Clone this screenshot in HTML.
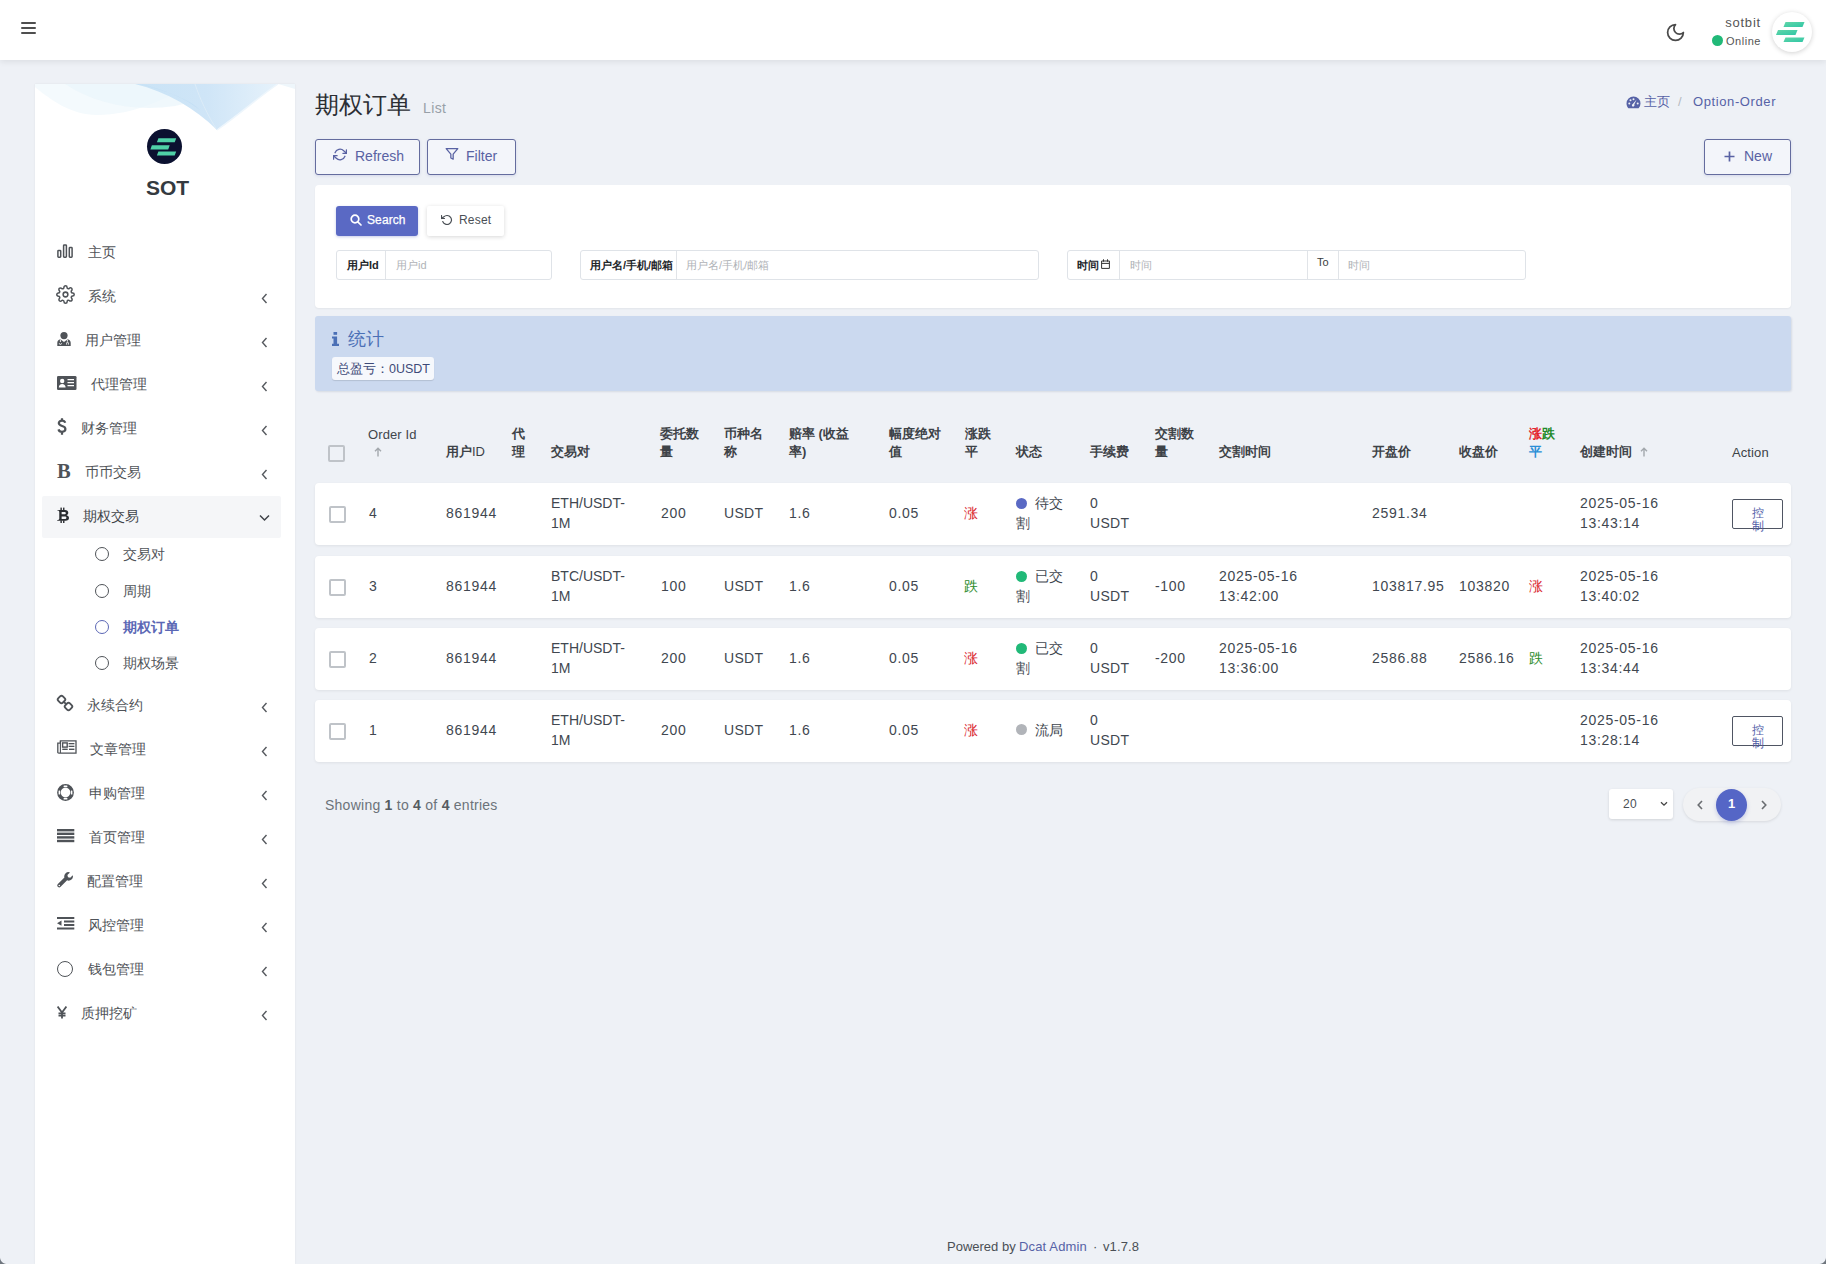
<!DOCTYPE html>
<html><head><meta charset="utf-8">
<style>
*{box-sizing:border-box;margin:0;padding:0}
html,body{width:1826px;height:1264px;overflow:hidden}
body{background:#eef1f6;font-family:"Liberation Sans",sans-serif;font-size:14px;color:#414750;position:relative}
.abs{position:absolute;white-space:nowrap}
#header{position:absolute;left:0;top:0;width:1826px;height:60px;background:#fff;box-shadow:0 2px 6px rgba(0,0,0,.08)}
#sidebar{position:absolute;left:35px;top:84px;width:260px;height:1180px;background:#fff;overflow:hidden;box-shadow:0 0 2px rgba(0,0,0,.07)}
.mi{position:absolute;left:0;width:260px;height:20px;color:#4e5257;font-size:14px}
.mi .t{position:absolute;top:0;line-height:20px}
.mi .ic{position:absolute;left:22px}
.mi .chev{position:absolute;left:224px;top:5px}
.btn-o{position:absolute;border:1px solid #5a69c4;border-radius:3px;color:#5a69c4;font-size:14px;background:transparent}
.card{position:absolute;background:#fff;border-radius:4px}
.ig{position:absolute;height:30px;border:1px solid #dfe3e8;border-radius:3px;background:#fff}
.ig .lab{position:absolute;top:0;height:28px;line-height:28px;font-size:11px;font-weight:bold;color:#222;text-align:center}
.ig .sep{position:absolute;top:0;width:1px;height:28px;background:#dfe3e8}
.ig .ph{position:absolute;top:0;line-height:28px;font-size:11px;color:#a6a9ad}
.th{position:absolute;font-size:13px;font-weight:bold;color:#3d4247;line-height:18px;white-space:nowrap}
.row{position:absolute;left:315px;width:1476px;height:62px;background:#fff;border-radius:4px;box-shadow:0 1px 3px rgba(0,0,0,.07)}
.td{position:absolute;font-size:14px;color:#414750;line-height:20px;white-space:nowrap}
.cb{position:absolute;width:17px;height:17px;border:2px solid #b9bdc2;border-radius:2px;background:#fff}
</style></head>
<body>
<div id="header">
<div class="abs" style="left:21px;top:22px;width:15px;height:2px;background:#4f4f4f;border-radius:1px"></div>
<div class="abs" style="left:21px;top:27px;width:15px;height:2px;background:#4f4f4f;border-radius:1px"></div>
<div class="abs" style="left:21px;top:32px;width:15px;height:2px;background:#4f4f4f;border-radius:1px"></div>
<svg class="abs" style="left:1665px;top:22px" width="21" height="21" viewBox="0 0 24 24"><path d="M12 3a6 6 0 0 0 9 9 9 9 0 1 1-9-9Z" fill="none" stroke="#4a4a4a" stroke-width="2" stroke-linejoin="round"/></svg>
<div class="abs" id="uname" style="right:65px;top:15px;font-size:13px;color:#555;line-height:16px;letter-spacing:.8px">sotbit</div>
<div class="abs" style="left:1712px;top:35px;width:11px;height:11px;border-radius:50%;background:#21b978"></div>
<div class="abs" id="online" style="right:65px;top:35px;font-size:11px;color:#555;line-height:13px;letter-spacing:.55px">Online</div>
<div class="abs" style="left:1772px;top:12px;width:40px;height:40px;border-radius:50%;background:#fff;box-shadow:0 1px 5px rgba(0,0,0,.18)">
<svg width="40" height="40" viewBox="0 0 40 40" style="position:absolute;left:0;top:0"><defs><linearGradient id="gg" x1="0" y1="0" x2="1" y2="1"><stop offset="0" stop-color="#62d6a8"/><stop offset="1" stop-color="#2fc6a6"/></linearGradient></defs>
<path d="M13.5 10h19l-2 5h-19z" fill="url(#gg)"/><path d="M6 18h19.5l-2 5H4z" fill="url(#gg)"/><path d="M13.5 25.5h19l-2 4.5h-19z" fill="url(#gg)"/></svg></div>
</div>
<div id="sidebar">
<svg style="position:absolute;left:0;top:0" width="260" height="60" viewBox="0 0 260 60">
<defs><linearGradient id="wv" x1="0" y1="0" x2="1" y2="0"><stop offset="0" stop-color="#c9e3f6"/><stop offset=".5" stop-color="#cfe5f7"/><stop offset="1" stop-color="#e6f2fb"/></linearGradient></defs>
<path d="M0 0H160C130 14 100 31 62 31 36 31 16 16 0 3Z" fill="#f4fafd"/>
<path d="M30 0C60 20 100 28 140 22 160 18 175 10 190 0Z" fill="#eaf5fb" opacity=".7"/>
<path d="M100 0C132 8 160 24 182 46 200 33 222 15 243 0Z" fill="url(#wv)"/>
<path d="M105 0C135 8 155 16 165 26 150 14 128 5 105 0Z" fill="#b9daf3" opacity=".6"/>
<path d="M160 0C165 15 172 30 182 46" stroke="#dcecf8" stroke-width="1" fill="none"/>
<path d="M182 46C205 30 225 12 243 0" stroke="#eef6fc" stroke-width="1.5" fill="none"/>
<path d="M243 0H260V5C253 3 248 1 243 0Z" fill="#eef6fb"/>
</svg>
<div style="position:absolute;left:112px;top:45px;width:35px;height:35px;border-radius:50%;background:#0b1130">
<svg width="35" height="35" viewBox="0 0 35 35" style="position:absolute;left:0;top:0"><g fill="#4fd1a7"><path d="M11.4 9.2h17.8l-1.5 4.1H9.9z"/><path d="M4.9 16.2h17.8l-1.5 4.2H3.4z"/><path d="M11.4 22.5h17.8l-1.5 4.1H9.9z"/></g></svg></div>
<div style="position:absolute;left:0;width:265px;top:92px;text-align:center;font-size:21px;font-weight:bold;color:#343a40;line-height:24px">SOT</div>
</div>
<div class="abs" style="left:42px;top:496px;width:239px;height:42px;background:#f5f6f8;border-radius:2px"></div>
<svg class="abs" style="left:57px;top:244px" width="16" height="14" viewBox="0 0 16 14"><g fill="none" stroke="#4f5358" stroke-width="1.5"><rect x=".9" y="6.4" width="2.8" height="6.8" rx=".7"/><rect x="6.6" y=".9" width="2.8" height="12.3" rx=".7"/><rect x="12.3" y="3.6" width="2.8" height="9.6" rx=".7"/></g></svg>
<div class="abs" style="left:88px;top:242px;line-height:20px;font-size:14px;color:#4f5358;">主页</div>
<svg class="abs" style="left:56px;top:285px" width="19" height="19" viewBox="0 0 24 24"><g fill="none" stroke="#4f5358" stroke-width="1.9" stroke-linejoin="round"><circle cx="12" cy="12" r="3"/><path d="M19.4 15a1.65 1.65 0 0 0 .33 1.82l.06.06a2 2 0 0 1 0 2.83 2 2 0 0 1-2.83 0l-.06-.06a1.65 1.65 0 0 0-1.82-.33 1.65 1.65 0 0 0-1 1.51V21a2 2 0 0 1-2 2 2 2 0 0 1-2-2v-.09A1.65 1.65 0 0 0 9 19.4a1.650 1.65 0 0 0-1.82.33l-.06.06a2 2 0 0 1-2.83 0 2 2 0 0 1 0-2.830l.06-.06a1.65 1.65 0 0 0 .33-1.82 1.65 1.65 0 0 0-1.51-1H3a2 2 0 0 1-2-2 2 2 0 0 1 2-2h.09A1.65 1.65 0 0 0 4.6 9a1.65 1.65 0 0 0-.33-1.82l-.06-.06a2 2 0 0 1 0-2.83 2 2 0 0 1 2.83 0l.06.06a1.65 1.65 0 0 0 1.82.33H9a1.65 1.65 0 0 0 1-1.51V3a2 2 0 0 1 2-2 2 2 0 0 1 2 2v.09a1.65 1.65 0 0 0 1 1.51 1.65 1.65 0 0 0 1.82-.33l.06-.06a2 2 0 0 1 2.83 0 2 2 0 0 1 0 2.83l-.06.06a1.65 1.65 0 0 0-.33 1.82V9a1.65 1.65 0 0 0 1.51 1H21a2 2 0 0 1 2 2 2 2 0 0 1-2 2h-.09a1.65 1.65 0 0 0-1.51 1z"/></g></svg>
<div class="abs" style="left:88px;top:286px;line-height:20px;font-size:14px;color:#4f5358;">系统</div>
<svg class="abs" style="left:261px;top:293px" width="7" height="11" viewBox="0 0 7 11"><path d="M5.5 1 1.5 5.5 5.5 10" fill="none" stroke="#55595e" stroke-width="1.4"/></svg>
<svg class="abs" style="left:57px;top:332px" width="14" height="14" viewBox="0 0 14 14"><circle cx="7" cy="3.6" r="3.6" fill="#4f5358"/><path d="M.3 14v-3.2c0-2 1.2-3.2 3-3.6L7 10l3.7-2.8c1.8.4 3 1.6 3 3.6V14z" fill="#4f5358"/><path d="M3.4 7.6v2.4M2.3 11.3a1.1 1.1 0 0 0 2.2 0M10.4 7.8v1.8M9.6 12.6v-1.4a.9.9 0 0 1 1.8 0v1.4" stroke="#fff" stroke-width=".9" fill="none"/></svg>
<div class="abs" style="left:85px;top:330px;line-height:20px;font-size:14px;color:#4f5358;">用户管理</div>
<svg class="abs" style="left:261px;top:337px" width="7" height="11" viewBox="0 0 7 11"><path d="M5.5 1 1.5 5.5 5.5 10" fill="none" stroke="#55595e" stroke-width="1.4"/></svg>
<svg class="abs" style="left:57px;top:376px" width="20" height="14" viewBox="0 0 20 14"><rect x="0" y="0" width="19.5" height="14" rx="1.3" fill="#4f5358"/><circle cx="5.2" cy="5" r="2.2" fill="#fff"/><path d="M1.8 11.6c0-2.3 1.4-3.6 3.4-3.6s3.4 1.3 3.4 3.6z" fill="#fff"/><path d="M10.5 3.6h6.5M10.5 6.6h6.5M10.5 9.6h6.5" stroke="#fff" stroke-width="1.3"/></svg>
<div class="abs" style="left:91px;top:374px;line-height:20px;font-size:14px;color:#4f5358;">代理管理</div>
<svg class="abs" style="left:261px;top:381px" width="7" height="11" viewBox="0 0 7 11"><path d="M5.5 1 1.5 5.5 5.5 10" fill="none" stroke="#55595e" stroke-width="1.4"/></svg>
<svg class="abs" style="left:57px;top:418px" width="10" height="17" viewBox="0 0 10 17"><path d="M8.2 4.8C7.8 3.4 6.6 2.6 5 2.6 3.1 2.6 1.8 3.6 1.8 5.1c0 1.6 1.3 2.3 3.3 2.9 2.1.6 3.3 1.4 3.3 3.1 0 1.6-1.4 2.7-3.4 2.7-1.8 0-3.1-.9-3.5-2.4M5 .3v2.5M5 14v2.7" fill="none" stroke="#4f5358" stroke-width="2.2"/></svg>
<div class="abs" style="left:81px;top:418px;line-height:20px;font-size:14px;color:#4f5358;">财务管理</div>
<svg class="abs" style="left:261px;top:425px" width="7" height="11" viewBox="0 0 7 11"><path d="M5.5 1 1.5 5.5 5.5 10" fill="none" stroke="#55595e" stroke-width="1.4"/></svg>
<div class="abs" style="left:57px;top:461px;font-family:'Liberation Serif',serif;font-size:20.5px;line-height:20px;font-weight:bold;color:#4f5358">B</div>
<div class="abs" style="left:85px;top:462px;line-height:20px;font-size:14px;color:#4f5358;">币币交易</div>
<svg class="abs" style="left:261px;top:469px" width="7" height="11" viewBox="0 0 7 11"><path d="M5.5 1 1.5 5.5 5.5 10" fill="none" stroke="#55595e" stroke-width="1.4"/></svg>
<svg class="abs" style="left:57px;top:507px" width="13" height="16" viewBox="0 0 13 16"><path fill-rule="evenodd" fill="#2a2d31" d="M0.1 3H8C10.2 3 11.3 4.1 11.3 5.8 11.3 7 10.6 7.8 9.6 8.2 11.1 8.6 12 9.6 12 11 12 12.7 10.7 13.65 8.4 13.65H0.1V13.3C1.4 13.1 2.26 12.6 2.26 11.8V4.9C2.26 4 1.4 3.5 0.1 3.3ZM4.63 5.1H7.4C8.3 5.1 8.8 5.6 8.8 6.2 8.8 6.8 8.3 7.24 7.4 7.24H4.63ZM4.63 9.38H7.7C8.8 9.38 9.4 9.9 9.4 10.7 9.4 11.5 8.8 12 7.7 12H4.63Z"/><g fill="#2a2d31"><rect x="3.44" y=".6" width="1.4" height="2.6"/><rect x="6.05" y=".6" width="1.4" height="2.6"/><rect x="3.44" y="13.4" width="1.4" height="2.6"/><rect x="6.05" y="13.4" width="1.4" height="2.6"/></g></svg>
<div class="abs" style="left:83px;top:506px;line-height:20px;font-size:14px;color:#4f5358;color:#3f4348">期权交易</div>
<svg class="abs" style="left:259px;top:514px" width="11" height="8" viewBox="0 0 11 8"><path d="M1 1.5 5.5 6 10 1.5" fill="none" stroke="#3f4348" stroke-width="1.5"/></svg>
<div class="abs" style="left:95px;top:547px;width:14px;height:14px;border:1.6px solid #4f5358;border-radius:50%"></div>
<div class="abs" style="left:123px;top:544px;line-height:20px;font-size:14px;color:#4f5358;">交易对</div>
<div class="abs" style="left:95px;top:584px;width:14px;height:14px;border:1.6px solid #4f5358;border-radius:50%"></div>
<div class="abs" style="left:123px;top:581px;line-height:20px;font-size:14px;color:#4f5358;">周期</div>
<div class="abs" style="left:95px;top:620px;width:14px;height:14px;border:1.6px solid #5b67b5;border-radius:50%"></div>
<div class="abs" style="left:123px;top:617px;line-height:20px;font-size:14px;color:#4f5358;font-weight:bold;color:#5b67b5">期权订单</div>
<div class="abs" style="left:95px;top:656px;width:14px;height:14px;border:1.6px solid #4f5358;border-radius:50%"></div>
<div class="abs" style="left:123px;top:653px;line-height:20px;font-size:14px;color:#4f5358;">期权场景</div>
<svg class="abs" style="left:56px;top:694px" width="18" height="18" viewBox="0 0 18 18"><g fill="none" stroke="#4f5358" stroke-width="1.9"><rect x="2.3" y="2.3" width="6.4" height="6.4" rx="2" transform="rotate(45 5.5 5.5)"/><rect x="9.3" y="9.3" width="6.4" height="6.4" rx="2" transform="rotate(45 12.5 12.5)"/><path d="M7.2 7.2 10.8 10.8"/></g></svg>
<div class="abs" style="left:87px;top:695px;line-height:20px;font-size:14px;color:#4f5358;">永续合约</div>
<svg class="abs" style="left:261px;top:702px" width="7" height="11" viewBox="0 0 7 11"><path d="M5.5 1 1.5 5.5 5.5 10" fill="none" stroke="#55595e" stroke-width="1.4"/></svg>
<svg class="abs" style="left:57px;top:740px" width="20" height="14" viewBox="0 0 20 14"><g fill="none" stroke="#4f5358"><path d="M3.4 .8h15.6v12.4H1.8A1 1 0 0 1 .8 12.2V3.2h2.6z" stroke-width="1.3"/><path d="M3.4 1v12" stroke-width="1.1"/><rect x="5.6" y="2.9" width="4.6" height="4.2" stroke-width="1.4"/></g><g fill="#4f5358"><rect x="11.6" y="3" width="5.8" height="1.3"/><rect x="11.6" y="5.7" width="5.8" height="1.3"/><rect x="5.3" y="8.6" width="5.4" height="1.4"/><rect x="12" y="8.6" width="5.4" height="1.4"/></g></svg>
<div class="abs" style="left:90px;top:739px;line-height:20px;font-size:14px;color:#4f5358;">文章管理</div>
<svg class="abs" style="left:261px;top:746px" width="7" height="11" viewBox="0 0 7 11"><path d="M5.5 1 1.5 5.5 5.5 10" fill="none" stroke="#55595e" stroke-width="1.4"/></svg>
<svg class="abs" style="left:57px;top:784px" width="17" height="17" viewBox="0 0 17 17"><circle cx="8.5" cy="8.5" r="6.6" fill="none" stroke="#4f5358" stroke-width="3.6"/><g fill="#fff"><rect x="6.6" y="1.6" width="3.8" height="1.6" rx=".5"/><rect x="6.6" y="13.8" width="3.8" height="1.6" rx=".5"/><rect x="1.6" y="6.6" width="1.6" height="3.8" rx=".5"/><rect x="13.8" y="6.6" width="1.6" height="3.8" rx=".5"/></g></svg>
<div class="abs" style="left:89px;top:783px;line-height:20px;font-size:14px;color:#4f5358;">申购管理</div>
<svg class="abs" style="left:261px;top:790px" width="7" height="11" viewBox="0 0 7 11"><path d="M5.5 1 1.5 5.5 5.5 10" fill="none" stroke="#55595e" stroke-width="1.4"/></svg>
<svg class="abs" style="left:57px;top:829px" width="18" height="14" viewBox="0 0 18 14"><g fill="#4f5358"><rect x="0" y="0" width="17.3" height="2.4"/><rect x="0" y="3.6" width="17.3" height="2.4"/><rect x="0" y="7.2" width="17.3" height="2.4"/><rect x="0" y="10.8" width="17.3" height="2.4"/></g></svg>
<div class="abs" style="left:89px;top:827px;line-height:20px;font-size:14px;color:#4f5358;">首页管理</div>
<svg class="abs" style="left:261px;top:834px" width="7" height="11" viewBox="0 0 7 11"><path d="M5.5 1 1.5 5.5 5.5 10" fill="none" stroke="#55595e" stroke-width="1.4"/></svg>
<svg class="abs" style="left:57px;top:872px" width="17" height="16" viewBox="0 0 17 16"><path d="M15.8 3.2 13.2 5.8 11 5.2 10.4 3 13 .4A4.3 4.3 0 0 0 7.4 5.6L.9 12.1a1.9 1.9 0 0 0 2.7 2.7l6.5-6.5a4.3 4.3 0 0 0 5.7-5.1z" fill="#4f5358"/><circle cx="2.3" cy="13.5" r=".8" fill="#fff"/></svg>
<div class="abs" style="left:87px;top:871px;line-height:20px;font-size:14px;color:#4f5358;">配置管理</div>
<svg class="abs" style="left:261px;top:878px" width="7" height="11" viewBox="0 0 7 11"><path d="M5.5 1 1.5 5.5 5.5 10" fill="none" stroke="#55595e" stroke-width="1.4"/></svg>
<svg class="abs" style="left:57px;top:917px" width="18" height="13" viewBox="0 0 18 13"><g fill="#4f5358"><rect x="0" y="0" width="17.3" height="2"/><rect x="7" y="3.5" width="10.3" height="2"/><rect x="7" y="7" width="10.3" height="2"/><rect x="0" y="10.5" width="17.3" height="2"/><path d="M0 6.2 4.5 3.6v5.2z"/></g></svg>
<div class="abs" style="left:88px;top:915px;line-height:20px;font-size:14px;color:#4f5358;">风控管理</div>
<svg class="abs" style="left:261px;top:922px" width="7" height="11" viewBox="0 0 7 11"><path d="M5.5 1 1.5 5.5 5.5 10" fill="none" stroke="#55595e" stroke-width="1.4"/></svg>
<div class="abs" style="left:57px;top:961px;width:16px;height:16px;border:1.6px solid #4f5358;border-radius:50%"></div>
<div class="abs" style="left:88px;top:959px;line-height:20px;font-size:14px;color:#4f5358;">钱包管理</div>
<svg class="abs" style="left:261px;top:966px" width="7" height="11" viewBox="0 0 7 11"><path d="M5.5 1 1.5 5.5 5.5 10" fill="none" stroke="#55595e" stroke-width="1.4"/></svg>
<svg class="abs" style="left:57px;top:1006px" width="10" height="13" viewBox="0 0 10 13"><path d="M.6.6 5 6.6 9.4.6M5 6.6V12.6M1.5 7.3h7M1.5 9.6h7" fill="none" stroke="#4f5358" stroke-width="1.8"/></svg>
<div class="abs" style="left:81px;top:1003px;line-height:20px;font-size:14px;color:#4f5358;">质押挖矿</div>
<svg class="abs" style="left:261px;top:1010px" width="7" height="11" viewBox="0 0 7 11"><path d="M5.5 1 1.5 5.5 5.5 10" fill="none" stroke="#55595e" stroke-width="1.4"/></svg>
<div class="abs" style="left:315px;top:90px;font-size:24px;line-height:30px;color:#2b2e33">期权订单</div>
<div class="abs" style="left:423px;top:98px;font-size:14px;line-height:20px;color:#98a0a8;letter-spacing:.4px">List</div>
<svg class="abs" style="left:1626px;top:96px" width="15" height="13" viewBox="0 0 15 13"><path d="M7.5.5A7 7 0 0 0 .5 7.5c0 1.9.7 3.5 1.9 4.8h10.2a7 7 0 0 0 1.9-4.8 7 7 0 0 0-7-7z" fill="#5662a6"/><g fill="#eef1f6"><circle cx="3.3" cy="7.5" r="1"/><circle cx="4.5" cy="4.3" r="1"/><circle cx="7.5" cy="3.2" r="1"/><circle cx="11.7" cy="7.5" r="1"/><path d="M10.6 3.6 8.3 8.6a1.3 1.3 0 1 1-1.5-.6z"/></g></svg>
<div class="abs" style="left:1644px;top:92px;font-size:13px;line-height:20px;color:#5662a6">主页</div>
<div class="abs" style="left:1678px;top:92px;font-size:13px;line-height:20px;color:#b5bac0">/</div>
<div class="abs" style="left:1693px;top:92px;font-size:13px;line-height:20px;color:#5662a6;letter-spacing:.6px">Option-Order</div>
<div style="position:absolute;border:1px solid #646c9e;border-radius:3px;background:#f3f5fa;box-shadow:0 1px 3px rgba(90,100,170,.18);left:315px;top:139px;width:105px;height:36px"></div>
<svg class="abs" style="left:333px;top:148px" width="14" height="13" viewBox="0 0 24 22"><g fill="none" stroke="#5962a3" stroke-width="2.2" stroke-linecap="round" stroke-linejoin="round"><path d="M23 3v6h-6M1 19v-6h6"/><path d="M3.5 8a9 9 0 0 1 14.85-3.36L23 9M1 13l4.64 4.36A9 9 0 0 0 20.5 14"/></g></svg>
<div class="abs" style="left:355px;top:146px;font-size:14px;line-height:20px;color:#5962a3">Refresh</div>
<div style="position:absolute;border:1px solid #646c9e;border-radius:3px;background:#f3f5fa;box-shadow:0 1px 3px rgba(90,100,170,.18);left:427px;top:139px;width:89px;height:36px"></div>
<svg class="abs" style="left:445px;top:148px" width="14" height="13" viewBox="0 0 24 22"><path d="M22 1H2l8 9.46V17l4 2v-8.54z" fill="none" stroke="#5962a3" stroke-width="2.2" stroke-linejoin="round"/></svg>
<div class="abs" style="left:466px;top:146px;font-size:14px;line-height:20px;color:#5962a3">Filter</div>
<div style="position:absolute;border:1px solid #646c9e;border-radius:3px;background:#f3f5fa;box-shadow:0 1px 3px rgba(90,100,170,.18);left:1704px;top:139px;width:87px;height:36px"></div>
<svg class="abs" style="left:1724px;top:151px" width="11" height="11" viewBox="0 0 11 11"><path d="M5.5 .5v10M.5 5.5h10" stroke="#5962a3" stroke-width="1.7"/></svg>
<div class="abs" style="left:1744px;top:146px;font-size:14px;line-height:20px;color:#5962a3">New</div>
<div class="abs" style="left:315px;top:185px;width:1476px;height:123px;background:#fff;border-radius:4px;box-shadow:0 1px 2px rgba(0,0,0,.05)"></div>
<div class="abs" style="left:336px;top:206px;width:82px;height:30px;background:#5a69c4;border-radius:3px;box-shadow:0 1px 3px rgba(92,107,192,.35)"></div>
<svg class="abs" style="left:350px;top:214px" width="12" height="12" viewBox="0 0 12 12"><circle cx="5" cy="5" r="3.8" fill="none" stroke="#fff" stroke-width="1.7"/><path d="M7.8 7.8 11 11" stroke="#fff" stroke-width="1.7" stroke-linecap="round"/></svg>
<div class="abs" style="left:367px;top:211px;font-size:12px;line-height:18px;color:#fff;-webkit-text-stroke:.25px #fff;letter-spacing:.1px">Search</div>
<div class="abs" style="left:427px;top:206px;width:77px;height:30px;background:#fff;border-radius:2px;box-shadow:0 1px 4px rgba(0,0,0,.16)"></div>
<svg class="abs" style="left:441px;top:214px" width="12" height="12" viewBox="0 0 24 24"><g fill="none" stroke="#4a4f55" stroke-width="2.4" stroke-linecap="round" stroke-linejoin="round"><path d="M1 3v6h6"/><path d="M3.5 15a9 9 0 1 0 2.1-9.4L1 9"/></g></svg>
<div class="abs" style="left:459px;top:211px;font-size:12px;line-height:18px;color:#4a4f55;letter-spacing:.2px">Reset</div>
<div class="ig" style="left:336px;top:250px;width:216px"></div>
<div class="abs" style="left:385px;top:251px;width:1px;height:28px;background:#e1e4e8"></div>
<div class="abs" style="left:347px;top:256px;font-size:11px;line-height:18px;font-weight:bold;color:#23262a">用户Id</div>
<div class="abs" style="left:396px;top:256px;font-size:11px;line-height:18px;color:#b0b3b7">用户id</div>
<div class="ig" style="left:580px;top:250px;width:459px"></div>
<div class="abs" style="left:676px;top:251px;width:1px;height:28px;background:#e1e4e8"></div>
<div class="abs" style="left:590px;top:256px;font-size:11px;line-height:18px;font-weight:bold;color:#23262a">用户名/手机/邮箱</div>
<div class="abs" style="left:686px;top:256px;font-size:11px;line-height:18px;color:#b0b3b7">用户名/手机/邮箱</div>
<div class="ig" style="left:1067px;top:250px;width:459px"></div>
<div class="abs" style="left:1119px;top:251px;width:1px;height:28px;background:#e1e4e8"></div>
<div class="abs" style="left:1307px;top:251px;width:1px;height:28px;background:#e1e4e8"></div>
<div class="abs" style="left:1338px;top:251px;width:1px;height:28px;background:#e1e4e8"></div>
<div class="abs" style="left:1077px;top:256px;font-size:11px;line-height:18px;font-weight:bold;color:#23262a">时间</div>
<svg class="abs" style="left:1101px;top:259px" width="9" height="10" viewBox="0 0 9 10"><path d="M.6 2h7.8v7.4H.6zM.6 4.4h7.8M2.5.3v2.4M6.5.3v2.4" fill="none" stroke="#333" stroke-width="1"/></svg>
<div class="abs" style="left:1130px;top:256px;font-size:11px;line-height:18px;color:#b0b3b7">时间</div>
<div class="abs" style="left:1317px;top:253px;font-size:11px;line-height:18px;color:#3a3d41">To</div>
<div class="abs" style="left:1348px;top:256px;font-size:11px;line-height:18px;color:#b0b3b7">时间</div>
<div class="abs" style="left:315px;top:316px;width:1476px;height:75px;background:#cbd9ef;border-radius:3px;box-shadow:1px 1px 2px rgba(40,60,100,.12)"></div>
<svg class="abs" style="left:332px;top:332px" width="7" height="14" viewBox="0 0 7 14"><rect x="1.5" y="0" width="3.6" height="2.8" fill="#4b70b6"/><path d="M0 4.4h5.1v7.4H7V14H0v-2.2h1.5V6.6H0z" fill="#4b70b6"/></svg>
<div class="abs" style="left:348px;top:327px;font-size:18px;line-height:24px;color:#4b70b6">统计</div>
<div class="abs" style="left:332px;top:357px;width:102px;height:23px;background:#f6f8fc;border-radius:3px;box-shadow:0 1px 1px rgba(0,0,0,.12)"></div>
<div class="abs" style="left:337px;top:360px;font-size:12.5px;line-height:18px;color:#3e4a78">总盈亏：0USDT</div>
<div class="abs" style="left:328px;top:445px;width:17px;height:17px;border:2px solid #bfc3c8;border-radius:2px"></div><!--hdrcb-->
<div class="th" style="left:368px;top:426px;font-weight:normal;letter-spacing:.1px;color:#41464c">Order Id</div>
<svg class="abs" style="left:374px;top:447px" width="8" height="10" viewBox="0 0 8 10"><path d="M4 9.5V1.2M1 4.2 4 1.2 7 4.2" fill="none" stroke="#a3a8ad" stroke-width="1.4"/></svg>
<div class="th" style="left:446px;top:443px;">用户<span style="font-weight:normal">ID</span></div>
<div class="th" style="left:512px;top:425px;">代<br>理</div>
<div class="th" style="left:551px;top:443px;">交易对</div>
<div class="th" style="left:660px;top:425px;">委托数<br>量</div>
<div class="th" style="left:724px;top:425px;">币种名<br>称</div>
<div class="th" style="left:789px;top:425px;">赔率 (收益<br>率)</div>
<div class="th" style="left:889px;top:425px;">幅度绝对<br>值</div>
<div class="th" style="left:965px;top:425px;">涨跌<br>平</div>
<div class="th" style="left:1016px;top:443px;">状态</div>
<div class="th" style="left:1090px;top:443px;">手续费</div>
<div class="th" style="left:1155px;top:425px;">交割数<br>量</div>
<div class="th" style="left:1219px;top:443px;">交割时间</div>
<div class="th" style="left:1372px;top:443px;">开盘价</div>
<div class="th" style="left:1459px;top:443px;">收盘价</div>
<div class="th" style="left:1529px;top:425px"><span style="color:#e3262f">涨</span><span style="color:#1f8a2a">跌</span><br><span style="color:#2a8fd6">平</span></div>
<div class="th" style="left:1580px;top:443px;">创建时间</div>
<svg class="abs" style="left:1640px;top:447px" width="8" height="10" viewBox="0 0 8 10"><path d="M4 9.5V1.2M1 4.2 4 1.2 7 4.2" fill="none" stroke="#a3a8ad" stroke-width="1.4"/></svg>
<div class="th" style="left:1732px;top:444px;font-weight:normal;letter-spacing:.1px">Action</div>
<div class="row" style="top:483px"></div>
<div class="abs" style="left:329px;top:506px;width:17px;height:17px;border:2px solid #bfc3c8;border-radius:2px;background:#fff"></div>
<div class="td" style="left:369px;top:502.5px;letter-spacing:.7px">4</div>
<div class="td" style="left:446px;top:502.5px;letter-spacing:.7px">861944</div>
<div class="td" style="left:551px;top:492.5px;">ETH/USDT-<br>1M</div>
<div class="td" style="left:661px;top:502.5px;letter-spacing:.7px">200</div>
<div class="td" style="left:724px;top:502.5px;letter-spacing:.3px">USDT</div>
<div class="td" style="left:789px;top:502.5px;letter-spacing:.7px">1.6</div>
<div class="td" style="left:889px;top:502.5px;letter-spacing:.7px">0.05</div>
<div class="td" style="left:964px;top:502.5px;color:#d9262f">涨</div>
<div class="abs" style="left:1016px;top:498px;width:11px;height:11px;border-radius:50%;background:#5a69c4"></div>
<div class="td" style="left:1035px;top:492.5px;">待交</div>
<div class="td" style="left:1016px;top:512.5px;">割</div>
<div class="td" style="left:1090px;top:492.5px;letter-spacing:.3px">0<br>USDT</div>
<div class="td" style="left:1372px;top:502.5px;letter-spacing:.7px">2591.34</div>
<div class="td" style="left:1580px;top:492.5px;letter-spacing:.7px">2025-05-16<br>13:43:14</div>
<div class="abs" style="left:1732px;top:499px;width:51px;height:30px;border:1px solid #4f5563;border-radius:2px"></div>
<div class="abs" style="left:1752px;top:507px;font-size:12px;line-height:13px;color:#4e5aa6">控<br>制</div>
<div class="row" style="top:556px"></div>
<div class="abs" style="left:329px;top:579px;width:17px;height:17px;border:2px solid #bfc3c8;border-radius:2px;background:#fff"></div>
<div class="td" style="left:369px;top:575.5px;letter-spacing:.7px">3</div>
<div class="td" style="left:446px;top:575.5px;letter-spacing:.7px">861944</div>
<div class="td" style="left:551px;top:565.5px;">BTC/USDT-<br>1M</div>
<div class="td" style="left:661px;top:575.5px;letter-spacing:.7px">100</div>
<div class="td" style="left:724px;top:575.5px;letter-spacing:.3px">USDT</div>
<div class="td" style="left:789px;top:575.5px;letter-spacing:.7px">1.6</div>
<div class="td" style="left:889px;top:575.5px;letter-spacing:.7px">0.05</div>
<div class="td" style="left:964px;top:575.5px;color:#2a8a2a">跌</div>
<div class="abs" style="left:1016px;top:571px;width:11px;height:11px;border-radius:50%;background:#21b978"></div>
<div class="td" style="left:1035px;top:565.5px;">已交</div>
<div class="td" style="left:1016px;top:585.5px;">割</div>
<div class="td" style="left:1090px;top:565.5px;letter-spacing:.3px">0<br>USDT</div>
<div class="td" style="left:1155px;top:575.5px;letter-spacing:.7px">-100</div>
<div class="td" style="left:1219px;top:565.5px;letter-spacing:.7px">2025-05-16<br>13:42:00</div>
<div class="td" style="left:1372px;top:575.5px;letter-spacing:.7px">103817.95</div>
<div class="td" style="left:1459px;top:575.5px;letter-spacing:.7px">103820</div>
<div class="td" style="left:1529px;top:575.5px;color:#d9262f">涨</div>
<div class="td" style="left:1580px;top:565.5px;letter-spacing:.7px">2025-05-16<br>13:40:02</div>
<div class="row" style="top:628px"></div>
<div class="abs" style="left:329px;top:651px;width:17px;height:17px;border:2px solid #bfc3c8;border-radius:2px;background:#fff"></div>
<div class="td" style="left:369px;top:647.5px;letter-spacing:.7px">2</div>
<div class="td" style="left:446px;top:647.5px;letter-spacing:.7px">861944</div>
<div class="td" style="left:551px;top:637.5px;">ETH/USDT-<br>1M</div>
<div class="td" style="left:661px;top:647.5px;letter-spacing:.7px">200</div>
<div class="td" style="left:724px;top:647.5px;letter-spacing:.3px">USDT</div>
<div class="td" style="left:789px;top:647.5px;letter-spacing:.7px">1.6</div>
<div class="td" style="left:889px;top:647.5px;letter-spacing:.7px">0.05</div>
<div class="td" style="left:964px;top:647.5px;color:#d9262f">涨</div>
<div class="abs" style="left:1016px;top:643px;width:11px;height:11px;border-radius:50%;background:#21b978"></div>
<div class="td" style="left:1035px;top:637.5px;">已交</div>
<div class="td" style="left:1016px;top:657.5px;">割</div>
<div class="td" style="left:1090px;top:637.5px;letter-spacing:.3px">0<br>USDT</div>
<div class="td" style="left:1155px;top:647.5px;letter-spacing:.7px">-200</div>
<div class="td" style="left:1219px;top:637.5px;letter-spacing:.7px">2025-05-16<br>13:36:00</div>
<div class="td" style="left:1372px;top:647.5px;letter-spacing:.7px">2586.88</div>
<div class="td" style="left:1459px;top:647.5px;letter-spacing:.7px">2586.16</div>
<div class="td" style="left:1529px;top:647.5px;color:#2a8a2a">跌</div>
<div class="td" style="left:1580px;top:637.5px;letter-spacing:.7px">2025-05-16<br>13:34:44</div>
<div class="row" style="top:700px"></div>
<div class="abs" style="left:329px;top:723px;width:17px;height:17px;border:2px solid #bfc3c8;border-radius:2px;background:#fff"></div>
<div class="td" style="left:369px;top:719.5px;letter-spacing:.7px">1</div>
<div class="td" style="left:446px;top:719.5px;letter-spacing:.7px">861944</div>
<div class="td" style="left:551px;top:709.5px;">ETH/USDT-<br>1M</div>
<div class="td" style="left:661px;top:719.5px;letter-spacing:.7px">200</div>
<div class="td" style="left:724px;top:719.5px;letter-spacing:.3px">USDT</div>
<div class="td" style="left:789px;top:719.5px;letter-spacing:.7px">1.6</div>
<div class="td" style="left:889px;top:719.5px;letter-spacing:.7px">0.05</div>
<div class="td" style="left:964px;top:719.5px;color:#d9262f">涨</div>
<div class="abs" style="left:1016px;top:724px;width:11px;height:11px;border-radius:50%;background:#b1b4b9"></div>
<div class="td" style="left:1035px;top:719.5px;">流局</div>
<div class="td" style="left:1090px;top:709.5px;letter-spacing:.3px">0<br>USDT</div>
<div class="td" style="left:1580px;top:709.5px;letter-spacing:.7px">2025-05-16<br>13:28:14</div>
<div class="abs" style="left:1732px;top:716px;width:51px;height:30px;border:1px solid #4f5563;border-radius:2px"></div>
<div class="abs" style="left:1752px;top:724px;font-size:12px;line-height:13px;color:#4e5aa6">控<br>制</div>
<div class="abs" style="left:325px;top:795px;font-size:14px;line-height:20px;color:#6c737a;letter-spacing:.25px">Showing <b style="color:#555b61">1</b> to <b style="color:#555b61">4</b> of <b style="color:#555b61">4</b> entries</div>
<div class="abs" style="left:1609px;top:789px;width:64px;height:30px;background:#fff;border-radius:3px;box-shadow:0 1px 3px rgba(0,0,0,.12)"></div>
<div class="abs" style="left:1623px;top:796px;font-size:12px;line-height:16px;color:#4a4f55;letter-spacing:.4px">20</div>
<svg class="abs" style="left:1660px;top:801px" width="8" height="6" viewBox="0 0 8 6"><path d="M1 1.2 4 4.2 7 1.2" fill="none" stroke="#444" stroke-width="1.3"/></svg>
<div class="abs" style="left:1683px;top:788px;width:98px;height:33px;background:#f1f2f4;border-radius:17px;box-shadow:0 1px 3px rgba(0,0,0,.10)"></div>
<svg class="abs" style="left:1697px;top:800px" width="6" height="10" viewBox="0 0 6 10"><path d="M5 1 1.2 5 5 9" fill="none" stroke="#6a6d71" stroke-width="1.6"/></svg>
<div class="abs" style="left:1716px;top:789px;width:31px;height:32px;border-radius:50%;background:#5566c6;box-shadow:0 2px 4px rgba(92,107,192,.3)"></div>
<div class="abs" style="left:1716px;top:795px;width:31px;text-align:center;font-size:13px;line-height:18px;color:#fff;font-weight:bold">1</div>
<svg class="abs" style="left:1761px;top:800px" width="6" height="10" viewBox="0 0 6 10"><path d="M1 1 4.8 5 1 9" fill="none" stroke="#6a6d71" stroke-width="1.6"/></svg>
<div class="abs" style="left:947px;top:1238px;font-size:13px;line-height:18px;color:#4a4f55;letter-spacing:0">Powered by</div><div class="abs" style="left:1019px;top:1238px;font-size:13px;line-height:18px;color:#5662a6;letter-spacing:.15px">Dcat Admin</div><div class="abs" style="left:1093px;top:1238px;font-size:13px;line-height:18px;color:#4a4f55">·</div><div class="abs" style="left:1103px;top:1238px;font-size:13px;line-height:18px;color:#4a4f55;letter-spacing:.1px">v1.7.8</div>
<div class="abs" style="left:0;top:1257px;width:7px;height:7px;background:radial-gradient(circle at 7px 0,rgba(0,0,0,0) 6.5px,#6f767e 7.5px)"></div>
<div class="abs" style="left:1819px;top:1257px;width:7px;height:7px;background:radial-gradient(circle at 0 0,rgba(0,0,0,0) 6.5px,#6f767e 7.5px)"></div>
</body></html>
